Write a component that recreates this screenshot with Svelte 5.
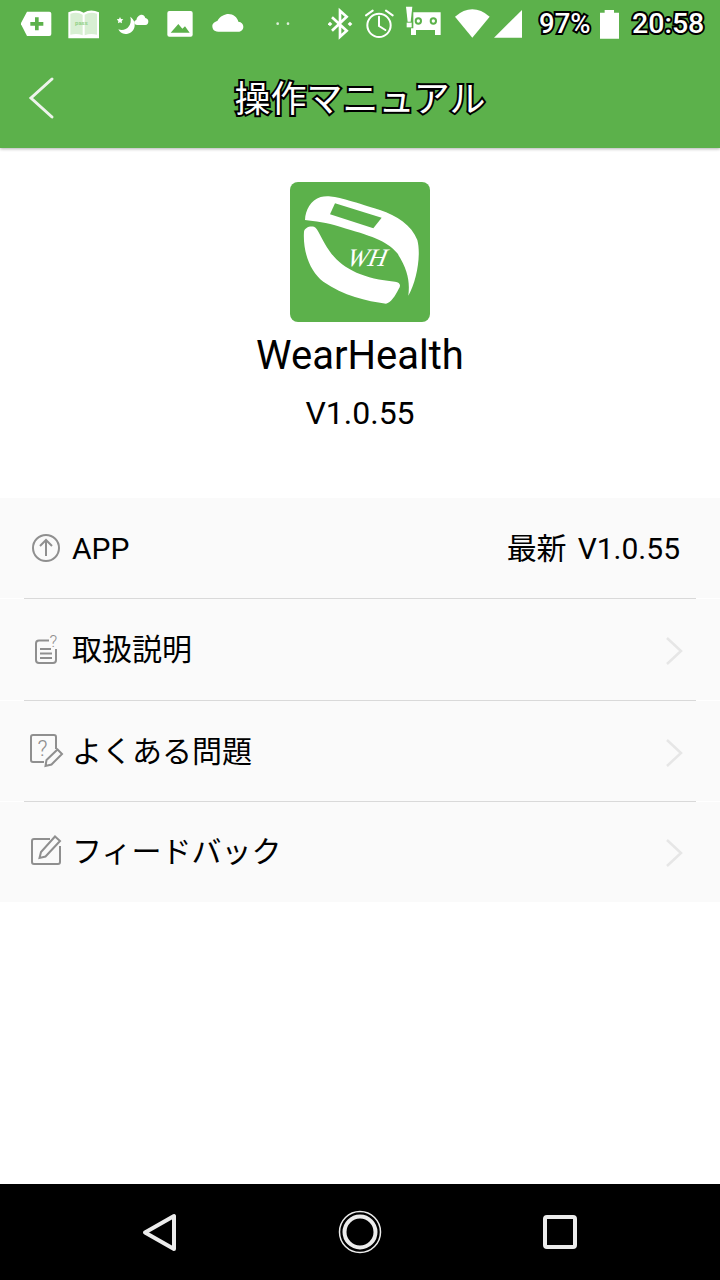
<script>
  const rows = [
    { id: 'faq', label: 'よくある問題' },
    { id: 'feedback', label: 'フィードバック' }
  ];
</script>

<div class="page">
  <header class="head">
    <div class="status">
      <!-- notification icons: each viewBox spans one slot of the 3x icon grid -->
      <svg class="ic w47" viewBox="63 0 141 144">
        <path class="w" d="M62 71 L81 35 H148 a6 6 0 0 1 6 6 V102 a6 6 0 0 1-6 6 H81 Z" />
        <path class="g" d="M105 52 h11 v14 h14 v11 h-14 v14 h-11 v-14 h-14 v-11 h14 Z" />
      </svg>
      <svg class="ic w49" viewBox="204 0 147 144">
        <path class="w" d="M205 37 Q230 26 251 38 Q272 26 297 37 V115 H205 Z" />
        <path class="pale" d="M211 41 Q232 34 248 44 V106 Q232 99 211 104 Z M254 44 Q270 34 291 41 V104 Q270 99 254 106 Z" />
        <text class="pass" x="225" y="76">pass</text>
      </svg>
      <svg class="ic w50" viewBox="351 0 150 144">
        <path class="w" d="M360 51 l3 6 7 1 -5 5 1 7 -6-3 -6 3 1-7 -5-5 7-1 Z" />
        <path class="w" d="M391 50 C415 68 404 102 376 102 C366 102 358 96 355 88 C376 96 398 78 391 50 Z" />
        <path class="w" d="M412 75 C400 75 400 62 409 60 C412 44 431 37 436 54 C448 55 448 75 436 75 Z" />
      </svg>
      <svg class="ic w45" viewBox="501 0 135 144">
        <rect class="w" x="502" y="33" width="76" height="77" rx="6" />
        <path class="g" d="M512 98 L535 72 L547 86 L555 79 L569 98 Z" />
      </svg>
      <svg class="ic w63" viewBox="636 0 189 144">
        <path class="w" d="M655 95 C640 95 637 85 637 78 C637 70 645 65 652 63 C660 48 675 42 685 42 C700 42 712 52 715 65 C725 66 730 73 730 80 C730 90 722 95 715 95 Z" />
      </svg>
      <svg class="ic w53" viewBox="825 0 159 144">
        <circle class="dot" cx="833" cy="71" r="4" />
        <circle class="dot" cx="864" cy="71" r="4" />
      </svg>
      <svg class="ic w37" viewBox="984 0 111 144">
        <path class="line" d="M996 52 L1040 92 L1020 110 V32 L1040 50 L996 92" />
        <rect class="w" x="985" y="67" width="10" height="10" transform="rotate(45 990 72)" />
        <rect class="w" x="1045" y="67" width="10" height="10" transform="rotate(45 1050 72)" />
      </svg>
      <svg class="ic w41" viewBox="15 0 123 144">
        <circle class="line thin" cx="57" cy="76" r="35" />
        <path class="line thin" d="M57 50 V78 L76 90 M18 46 L38 32 M78 32 L98 46" />
      </svg>
      <svg class="ic w49" viewBox="138 0 147 144">
        <path class="w" d="M138 20 H157 L152 65 H143 Z" />
        <rect class="w" x="140" y="68" width="15" height="14" />
        <path class="w" d="M160 37 H242 V105 H225 V90 H168 V105 H153 V85 H160 Z" />
        <circle class="g" cx="175" cy="63" r="11" />
        <circle class="w" cx="175" cy="63" r="5" />
        <circle class="g" cx="220" cy="63" r="11" />
        <circle class="w" cx="220" cy="63" r="5" />
      </svg>
      <svg class="ic w39" viewBox="285 0 117 144">
        <path class="w" d="M285 50 Q337 6 389 50 L337 113 Z" />
      </svg>
      <svg class="ic w46" viewBox="402 0 138 144">
        <path class="w" d="M402 113 L486 30 V113 Z" />
      </svg>
      <span class="clock pct">97%</span>
      <svg class="ic w33" viewBox="718 0 99 144">
        <path class="w" d="M732 30 H760 V38 H775 V116 H718 V38 H732 Z" />
      </svg>
      <span class="clock">20:58</span>
    </div>
    <div class="bar">
      <svg class="back" viewBox="0 0 30 48">
        <path d="M25 5 L4 24 L25 43" />
      </svg>
      <h1>操作マニュアル</h1>
    </div>
  </header>

  <section class="hero">
    <!-- app mark, drawn on a 3x grid -->
    <svg class="logo" viewBox="30 21 420 420">
      <rect class="g" x="30" y="21" width="420" height="420" rx="24" />
      <path class="w" d="M75 135 C76 105 92 76 122 66 C150 58 185 68 300 105 C350 122 395 150 412 195 C424 240 410 320 385 362 C390 320 384 285 352 235 C320 195 270 182 180 155 C140 143 105 138 75 135 Z" />
      <path class="g" d="M165 85 L305 128 L280 160 L150 118 Z" />
      <path class="w" d="M72 170 C74 158 88 152 102 155 C115 160 122 190 150 230 C185 280 250 312 345 320 C360 322 364 330 356 342 C346 362 332 384 318 386 C260 378 190 362 130 320 C90 290 68 230 72 170 Z" />
      <text class="wh" transform="translate(198 274) skewX(-12)">WH</text>
    </svg>
    <div class="name">WearHealth</div>
    <div class="ver">V1.0.55</div>
  </section>

  <section class="list">
    <div class="row">
      <svg class="ri" viewBox="0 0 50 50">
        <circle cx="24" cy="25" r="13" />
        <path d="M24 33 V17 M18 23 L24 17 L30 23" />
      </svg>
      <span class="label">APP</span>
      <span class="val"><span class="new">最新</span>V1.0.55</span>
    </div>
    <div class="sep"></div>
    <div class="row tall">
      <svg class="ri" viewBox="0 0 50 50">
        <path d="M27 16.5 H17 a3 3 0 0 0-3 3 V36 a3 3 0 0 0 3 3 H31 a3 3 0 0 0 3-3 V25" />
        <path d="M18 25 H29 M18 29.5 H30 M18 34 H30" />
        <text class="q small" x="27.500" y="23">?</text>
      </svg>
      <span class="label">取扱説明</span>
      <svg class="chev" viewBox="0 0 20 32"><path d="M3 3 L17 16 L3 29" /></svg>
    </div>
    <div class="sep"></div>
    {#each rows as row, i}
      <div class="row">
        {#if row.id === 'faq'}
          <svg class="ri" viewBox="0 1 50 50">
            <path d="M22 37 H11 a2 2 0 0 1-2-2 V12 a2 2 0 0 1 2-2 H32 a2 2 0 0 1 2 2 V24" />
            <path d="M24.500 35 L23.500 41 L29.500 39.500 L40 29 L35.500 24.500 Z" />
            <text class="q" x="15.500" y="31">?</text>
          </svg>
        {:else}
          <svg class="ri" viewBox="0 1 50 50">
            <path d="M28 14 H12 a2 2 0 0 0-2 2 V37 a2 2 0 0 0 2 2 H36 a2 2 0 0 0 2-2 V21" />
            <path d="M17.500 33 L19 27 L33 11.500 L38 16 L23.500 31.500 Z" />
          </svg>
        {/if}
        <span class="label">{row.label}</span>
        <svg class="chev" viewBox="0 0 20 32"><path d="M3 3 L17 16 L3 29" /></svg>
      </div>
      {#if i < rows.length - 1}<div class="sep"></div>{/if}
    {/each}
  </section>

  <div class="fill"></div>

  <nav class="nav">
    <svg viewBox="0 0 40 44"><path d="M34 6 V39 L5 22.500 Z" /></svg>
    <svg class="home" viewBox="0 0 44 44">
      <circle cx="22" cy="22" r="15.500" />
      <circle class="ring" cx="22" cy="22" r="20.500" />
    </svg>
    <svg viewBox="0 0 40 40"><rect x="5" y="5" width="30" height="30" rx="2" /></svg>
  </nav>
</div>

<style>
  :global(body) {
    margin: 0;
    background: #fff;
  }

  .page {
    display: flex;
    flex-direction: column;
    min-height: 1280px;
    font-family: Roboto, "Noto Sans CJK JP", sans-serif;
    color: #000;
  }

  .w { fill: #fff; }
  .g { fill: #5cb14b; }
  .pale { fill: #d8efd3; }
  .dot { fill: #fff; opacity: 0.8; }
  .line { fill: none; stroke: #fff; stroke-width: 8; }
  .line.thin { stroke-width: 6; stroke-linecap: round; }
  .pass {
    fill: #93d188;
    font: 700 18px Roboto, sans-serif;
  }

  .head {
    position: relative;
    background: #5cb14b;
    box-shadow: 0 1px 3px rgba(0, 0, 0, 0.3);
  }

  .status {
    display: flex;
    align-items: center;
    height: 48px;
    padding-left: 21px;
  }

  .ic { height: 48px; flex: none; }
  .w33 { width: 33px; }
  .w37 { width: 37px; }
  .w39 { width: 39px; }
  .w41 { width: 41px; }
  .w45 { width: 45px; }
  .w46 { width: 46px; }
  .w47 { width: 47px; }
  .w49 { width: 49px; }
  .w50 { width: 50px; }
  .w53 { width: 53px; }
  .w63 { width: 63px; }

  .clock {
    flex: none;
    margin-left: -1px;
    color: #fff;
    font: 500 28.500px/48px Roboto, sans-serif;
    -webkit-text-stroke: 4px #000;
    paint-order: stroke fill;
    width: 75px;
  }

  .pct {
    font-size: 27.500px;
    width: 61px;
  }

  .bar {
    position: relative;
    display: flex;
    align-items: center;
    justify-content: center;
    height: 96px;
    padding-bottom: 4px;
  }

  .back {
    position: absolute;
    left: 27px;
    top: 26px;
    width: 30px;
    height: 48px;
    fill: none;
    stroke: #eef3ec;
    stroke-width: 3;
    stroke-linecap: round;
  }

  h1 {
    margin: 0;
    color: #fff;
    font: 400 36px/50px "Noto Sans CJK JP", sans-serif;
    -webkit-text-stroke: 4px #000;
    paint-order: stroke fill;
  }

  .hero {
    display: flex;
    flex-direction: column;
    align-items: center;
    padding: 34px 0 65px;
  }

  .logo {
    width: 140px;
    height: 140px;
    display: block;
  }

  .wh {
    fill: #fff;
    font: italic 400 76px "Liberation Serif", serif;
  }

  .name {
    margin-top: 11px;
    font-size: 40px;
    line-height: 46px;
  }

  .ver {
    margin-top: 14px;
    font-size: 32px;
    line-height: 40px;
  }

  .list {
    background: #fafafa;
    font-size: 30px;
  }

  .row {
    box-sizing: border-box;
    display: flex;
    align-items: center;
    height: 100px;
    padding: 2px 36px 0 22px;
  }

  .row.tall {
    height: 101px;
    padding-top: 1px;
  }

  .row:last-child {
    padding-top: 0;
  }

  .label,
  .val {
    line-height: 44px;
  }

  .ri {
    flex: none;
    width: 50px;
    height: 50px;
    margin-top: -2px;
    fill: none;
    stroke: #8f8f8f;
    stroke-width: 2;
  }

  .q {
    fill: #8f8f8f;
    stroke: none;
    font: 300 22px Roboto, sans-serif;
  }

  .q.small {
    font-size: 17px;
  }

  .val {
    margin-left: auto;
    margin-right: 4px;
  }

  .new {
    margin-right: 11px;
  }

  .chev {
    flex: none;
    width: 20px;
    height: 32px;
    margin-left: auto;
    margin-top: 2px;
    fill: none;
    stroke: #e6e6e6;
    stroke-width: 2.5;
  }

  .sep {
    height: 1px;
    padding: 0 24px;
    background: #fff;
  }

  .sep::before {
    content: "";
    display: block;
    height: 1px;
    background: #d9d9d9;
  }

  .fill {
    flex: 1;
  }

  .nav {
    display: flex;
    align-items: center;
    justify-content: center;
    gap: 158px;
    height: 96px;
    background: #000;
  }

  .nav svg {
    width: 40px;
    height: 44px;
    fill: none;
    stroke: #ececec;
    stroke-width: 4;
    stroke-linejoin: round;
  }

  .nav .home {
    width: 44px;
  }

  .ring {
    stroke-width: 1.500;
  }
</style>
